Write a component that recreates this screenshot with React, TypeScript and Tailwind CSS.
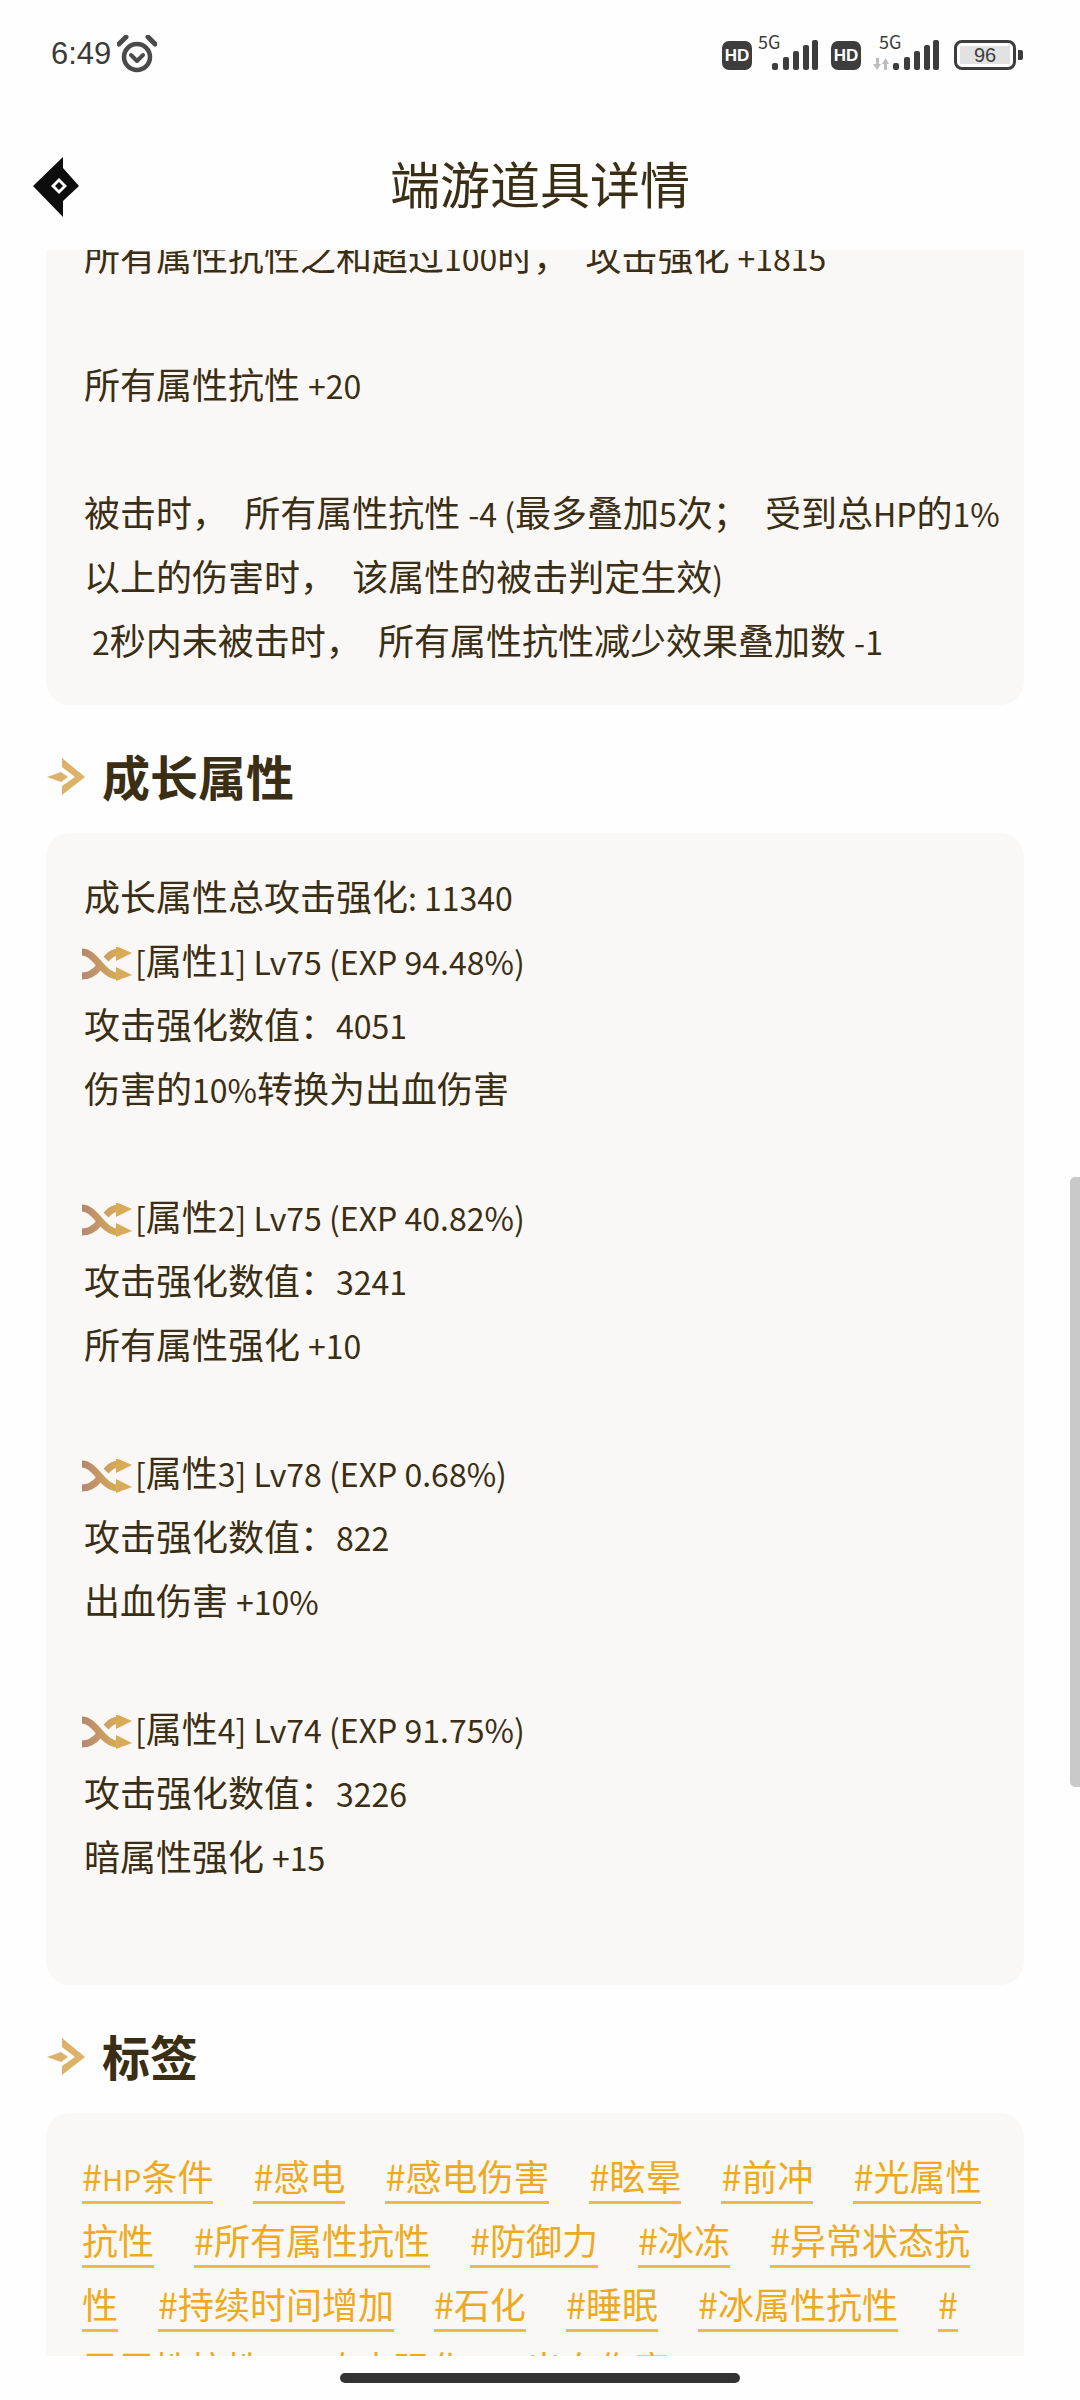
import React from 'react';

const cjkFont = { fontFamily: '"Noto Sans CJK SC", "Noto Sans", sans-serif' };

function Logo() {
  return (
    <svg viewBox="0 0 46 61" className="w-[46px] h-[61px] shrink-0">
      <path d="M0 29 L30 0 L30 11 L46 29 L30 44 L30 60 Z" fill="#0d0d0d" />
      <path d="M26 21 L34 29 L26 37 L18 29 Z" fill="#fff" />
      <path d="M26 25 L30 29 L26 33 L22 29 Z" fill="#0d0d0d" />
    </svg>
  );
}

function Alarm() {
  return (
    <svg viewBox="0 0 40 38" className="w-[40px] h-[38px]" fill="none" stroke="#4a4a4a">
      <circle cx="20" cy="22" r="13" strokeWidth="4.5" />
      <path d="M14 20 L20 26 L26 20" strokeWidth="4" strokeLinecap="round" strokeLinejoin="round" />
      <path d="M2 9 L9 2" strokeWidth="5" strokeLinecap="round" />
      <path d="M38 9 L31 2" strokeWidth="5" strokeLinecap="round" />
    </svg>
  );
}

function HdBadge() {
  return (
    <span className="w-[30px] h-[29px] rounded-[7px] bg-[#3d3d3d] flex items-center justify-center text-white text-[17px] font-bold leading-none" style={{ fontFamily: '"Liberation Sans", sans-serif' }}>
      HD
    </span>
  );
}

function Signal() {
  return (
    <svg viewBox="0 0 46 30" className="w-[46px] h-[30px]" fill="#3d3d3d">
      <rect x="0" y="23" width="6" height="7" rx="2" />
      <rect x="11" y="17" width="6" height="13" rx="2" />
      <rect x="21" y="11" width="6" height="19" rx="2" />
      <rect x="31" y="5" width="6" height="25" rx="2" />
      <rect x="40" y="0" width="6" height="30" rx="2" />
    </svg>
  );
}

function DataArrows() {
  return (
    <svg viewBox="0 0 17 12" className="w-[17px] h-[12px]" fill="#bdbdbd">
      <path d="M3 0 H6 V6 H8 L4 12 L0 6 H3 Z" />
      <path d="M11 12 H14 V6 H16 L12.5 0 L9 6 H11 Z" />
    </svg>
  );
}

function StatusBar() {
  return (
    <div className="h-[100px] flex items-start justify-between pl-[51px] pr-[57px] pt-[35px]">
      <div className="flex items-center gap-[6px] h-[38px] text-[31px] text-[#3a3a3a] font-light" style={{ fontFamily: '"Liberation Sans", sans-serif' }}>
        <span>6:49</span>
        <Alarm />
      </div>
      <div className="flex items-end h-[35px]">
        <HdBadge />
        <div className="relative w-[66px] h-[35px]">
          <span className="absolute left-[6px] -top-[3px] text-[18px] leading-[18px] text-[#3d3d3d]">5G</span>
          <div className="absolute right-0 bottom-0"><Signal /></div>
        </div>
        <div className="ml-[13px]"><HdBadge /></div>
        <div className="relative w-[78px] h-[35px]">
          <span className="absolute left-[18px] -top-[3px] text-[18px] leading-[18px] text-[#3d3d3d]">5G</span>
          <div className="absolute left-[12px] bottom-0"><DataArrows /></div>
          <div className="absolute right-0 bottom-0"><Signal /></div>
        </div>
        <div className="ml-[15px] flex items-center">
          <div className="w-[62px] h-[30px] rounded-[8px] border-[3px] border-[#3d3d3d] p-[3px]">
            <div className="w-full h-full bg-[#e2e2e2] flex items-center justify-center text-[20px] leading-none text-[#3d3d3d] font-light" style={{ fontFamily: '"Liberation Sans", sans-serif' }}>96</div>
          </div>
          <div className="w-[5px] h-[10px] rounded-r-[2px] ml-[2px] bg-[#3d3d3d]" />
        </div>
      </div>
    </div>
  );
}

function SectionIcon() {
  return (
    <svg viewBox="0 0 38 38" className="w-[38px] h-[38px] shrink-0" fill="#dcb268">
      <path d="M0 19 L14 14 L21 19 L14 24 Z" />
      <path d="M15 0 L38 19 L15 37 L15 28 L28 19 L15 9 Z" />
    </svg>
  );
}

function Heading({ title }: { title: string }) {
  return (
    <div className="h-[64px] mt-[40px] mb-[24px] flex items-center gap-[17px] pl-[47px]">
      <SectionIcon />
      <span className="text-[48px] font-bold text-[#3a2e14] leading-none -mt-[4px]">{title}</span>
    </div>
  );
}

function ShuffleIcon() {
  return (
    <svg viewBox="0 0 50 34" className="w-[50px] h-[34px] inline-block align-[-6px] mr-[3px]" fill="none">
      <defs>
        <linearGradient id="shuffleA" x1="0" y1="0" x2="1" y2="0">
          <stop offset="0" stopColor="#b5866f" />
          <stop offset="1" stopColor="#d8ab58" />
        </linearGradient>
      </defs>
      <path d="M0 5 C14 5 20 29 36 29" stroke="url(#shuffleA)" strokeWidth="7" />
      <path d="M0 29 C8 29 13 25 17 20 M24 12 C28 8 31 5 36 5" stroke="url(#shuffleA)" strokeWidth="7" />
      <path d="M34 -1 L50 6 L34 14 Z" fill="#d8ab58" />
      <path d="M34 20 L50 28 L34 34 Z" fill="#d8ab58" />
    </svg>
  );
}

// the reference's latin glyphs run narrower than its CJK ones
function Line({ text }: { text: string }) {
  const parts = text.split(/([\x21-\x7e]+(?: [\x21-\x7e]+)*)/);
  return (
    <>
      {parts.map((p, i) => (i % 2 ? <span key={i} className="text-[32px] leading-none">{p}</span> : p))}
    </>
  );
}

function AttrHead({ text }: { text: string }) {
  return (
    <div className="-ml-[2px] h-[64px]">
      <ShuffleIcon />
      <Line text={text} />
    </div>
  );
}

function Blank() {
  return <div className="h-[64px]" />;
}

function Card({ children, className = '' }: { children: React.ReactNode; className?: string }) {
  return (
    <div className={`ml-[46px] mr-[56px] rounded-3xl bg-[#faf8f6] pt-[30px] pb-[34px] text-[36px] leading-[64px] text-[#3a2e14] whitespace-pre-wrap ${className}`}>
      {children}
    </div>
  );
}

const tags = [
  '#感电', '#感电伤害', '#眩晕', '#前冲', '#光属性抗性', '#所有属性抗性', '#防御力', '#冰冻',
  '#异常状态抗性', '#持续时间增加', '#石化', '#睡眠', '#冰属性抗性', '#雷属性抗性', '#攻击强化', '#出血伤害',
];

export default function App() {
  return (
    <div className="relative w-[1080px] h-[2400px] bg-[#fffefe] overflow-hidden" style={cjkFont}>
      <StatusBar />
      <div className="h-[150px] flex items-center relative pl-[33px] pt-[25px]">
        <Logo />
        <span className="absolute left-0 right-0 text-center text-[50px] text-[#3a2e14] top-[47px] leading-[70px]">端游道具详情</span>
      </div>

      <div className="h-[2106px] overflow-hidden">
        <div className="-mt-[57px]">
          <Card className="pl-[38px] pr-[24px]">
            <div><Line text="所有属性抗性之和超过100时，  攻击强化 +1815" /></div>
            <Blank />
            <div><Line text="所有属性抗性 +20" /></div>
            <Blank />
            <div><Line text="被击时，  所有属性抗性 -4 (最多叠加5次；  受到总HP的1%以上的伤害时，  该属性的被击判定生效)" /></div>
            <div> <Line text="2秒内未被击时，  所有属性抗性减少效果叠加数 -1" /></div>
          </Card>

          <Heading title="成长属性" />
          <Card className="pl-[38px] pr-[24px]">
            <div><Line text="成长属性总攻击强化: 11340" /></div>
            <AttrHead text="[属性1] Lv75 (EXP 94.48%)" />
            <div><Line text="攻击强化数值：4051" /></div>
            <div><Line text="伤害的10%转换为出血伤害" /></div>
            <Blank />
            <AttrHead text="[属性2] Lv75 (EXP 40.82%)" />
            <div><Line text="攻击强化数值：3241" /></div>
            <div><Line text="所有属性强化 +10" /></div>
            <Blank />
            <AttrHead text="[属性3] Lv78 (EXP 0.68%)" />
            <div><Line text="攻击强化数值：822" /></div>
            <div><Line text="出血伤害 +10%" /></div>
            <Blank />
            <AttrHead text="[属性4] Lv74 (EXP 91.75%)" />
            <div><Line text="攻击强化数值：3226" /></div>
            <div><Line text="暗属性强化 +15" /></div>
            <Blank />
          </Card>

          <Heading title="标签" />
          <Card className="pl-[36px] pr-[36px] whitespace-normal text-[#eeaa1e]">
            <span className="border-b-[3px] border-[#edbb45] break-all">#<span className="text-[29px] leading-none">HP</span>条件</span>
            <span className="inline-block w-[40px]" />
            {tags.map((t) => (
              <React.Fragment key={t}>
                <span className="border-b-[3px] border-[#edbb45] break-all">{t}</span>
                <span className="inline-block w-[40px]" />
              </React.Fragment>
            ))}
          </Card>
        </div>
      </div>

      <div className="absolute right-0 top-[1177px] w-[10px] h-[610px] rounded-l-[5px] bg-[#c9c9c9]" />
      <div className="absolute left-[340px] top-[2373px] w-[400px] h-[10px] rounded-full bg-[#333333]" />
    </div>
  );
}
